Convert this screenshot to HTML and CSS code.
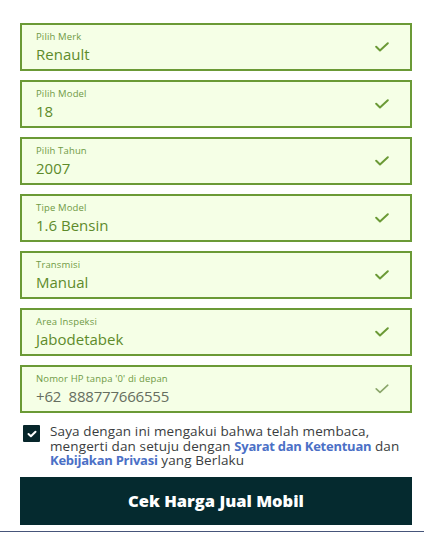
FILE: index.html
```html
<!DOCTYPE html>
<html lang="id">
<head>
<meta charset="utf-8">
<title>Cek Harga Jual Mobil</title>
<link rel="stylesheet" href="styles.css">
</head>
<body>
<form class="form">
  <div class="field">
    <div class="field-text"><span class="label">Pilih Merk</span><span class="value">Renault</span></div>
    <svg class="tick" viewBox="0 0 14 10"><path d="M1.2 4.8 L5 8.4 L12.8 1.2"/></svg>
  </div>
  <div class="field">
    <div class="field-text"><span class="label">Pilih Model</span><span class="value">18</span></div>
    <svg class="tick" viewBox="0 0 14 10"><path d="M1.2 4.8 L5 8.4 L12.8 1.2"/></svg>
  </div>
  <div class="field">
    <div class="field-text"><span class="label">Pilih Tahun</span><span class="value">2007</span></div>
    <svg class="tick" viewBox="0 0 14 10"><path d="M1.2 4.8 L5 8.4 L12.8 1.2"/></svg>
  </div>
  <div class="field">
    <div class="field-text"><span class="label">Tipe Model</span><span class="value">1.6 Bensin</span></div>
    <svg class="tick" viewBox="0 0 14 10"><path d="M1.2 4.8 L5 8.4 L12.8 1.2"/></svg>
  </div>
  <div class="field">
    <div class="field-text"><span class="label">Transmisi</span><span class="value">Manual</span></div>
    <svg class="tick" viewBox="0 0 14 10"><path d="M1.2 4.8 L5 8.4 L12.8 1.2"/></svg>
  </div>
  <div class="field">
    <div class="field-text"><span class="label">Area Inspeksi</span><span class="value">Jabodetabek</span></div>
    <svg class="tick" viewBox="0 0 14 10"><path d="M1.2 4.8 L5 8.4 L12.8 1.2"/></svg>
  </div>
  <div class="field field-phone">
    <div class="field-text"><span class="label">Nomor HP tanpa '0' di depan</span><span class="value">+62&nbsp; 888777666555</span></div>
    <svg class="tick tick-light" viewBox="0 0 14 10"><path d="M1.2 4.8 L5 8.4 L12.8 1.2"/></svg>
  </div>
  <div class="agree">
    <span class="checkbox"><svg viewBox="0 0 10 8"><path d="M1.5 4 L3.9 6.2 L8.5 1.7"/></svg></span>
    <p class="agree-text">Saya dengan ini mengakui bahwa telah membaca, mengerti dan setuju dengan <a class="link">Syarat dan Ketentuan</a> dan <a class="link">Kebijakan Privasi</a> yang Berlaku</p>
  </div>
  <button type="button" class="submit">Cek Harga Jual Mobil</button>
</form>
<div class="bottom-line"></div>
</body>
</html>
```

FILE: styles.css
```css
html, body {
  margin: 0;
  padding: 0;
  background: #ffffff;
}
body {
  width: 424px;
  height: 534px;
  position: relative;
  overflow: hidden;
  font-family: "Open Sans", "Liberation Sans", sans-serif;
}
.form {
  display: flex;
  flex-direction: column;
  gap: 9px;
  padding: 23px 12px 0 20px;
}
.field {
  box-sizing: border-box;
  height: 48px;
  border: 2px solid #6b9a36;
  background: #f5ffe6;
  display: flex;
  align-items: center;
  padding: 0 21px 0 14px;
}
.field-text {
  flex: 1;
  display: flex;
  flex-direction: column;
  padding-top: 1px;
}
.label {
  font-size: 9.5px;
  line-height: 12px;
  letter-spacing: 0.15px;
  color: #6f9a45;
}
.value {
  font-size: 15px;
  line-height: 19px;
  color: #5e8b2b;
  margin-top: 2px;
}
.tick {
  width: 14px;
  height: 10px;
  fill: none;
  stroke: #6b9a36;
  stroke-width: 2;
  stroke-linecap: round;
  stroke-linejoin: round;
}
.tick-light {
  stroke: #8aa66a;
  stroke-width: 1.6;
}
.field-phone .value {
  color: #666e60;
  letter-spacing: -0.2px;
}
.agree {
  display: flex;
  align-items: flex-start;
  gap: 10px;
  margin-top: 2px;
  padding-left: 3px;
}
.checkbox {
  flex: none;
  width: 17px;
  height: 17px;
  margin-top: 1px;
  background: #07262b;
  border-radius: 1px;
  display: flex;
  align-items: center;
  justify-content: center;
}
.checkbox svg {
  width: 10px;
  height: 8px;
  fill: none;
  stroke: #ffffff;
  stroke-width: 2;
  stroke-linecap: round;
  stroke-linejoin: round;
}
.agree-text {
  margin: 0;
  font-size: 13.5px;
  line-height: 14.5px;
  letter-spacing: 0.12px;
  color: #3a3d40;
}
.link {
  color: #4b70c6;
  font-weight: 700;
  font-size: 13px;
  letter-spacing: -0.25px;
}
.submit {
  margin-top: 0;
  height: 48px;
  border: none;
  background: #052a2f;
  color: #ffffff;
  font-family: inherit;
  font-size: 16.5px;
  font-weight: 800;
  padding: 0;
}
.bottom-line {
  position: absolute;
  left: 0;
  right: 0;
  top: 531px;
  height: 1px;
  background: #46557a;
}
```
